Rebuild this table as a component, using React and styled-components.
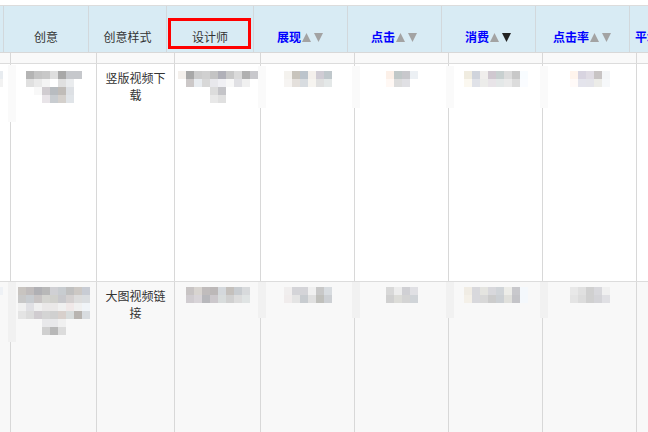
import React from "react";
import styled, { createGlobalStyle } from "styled-components";

const GlobalStyle = createGlobalStyle`
  html, body {
    margin: 0;
    padding: 0;
    background: #ffffff;
    overflow: hidden;
  }
  body {
    font-family: "Noto Sans CJK SC", "Liberation Sans", sans-serif;
  }
`;

const headCols = [
  { w: 4 },
  { w: 85, label: "创意" },
  { w: 78, label: "创意样式" },
  { w: 87, label: "设计师", marked: true },
  { w: 94, label: "展现", sort: "none" },
  { w: 94, label: "点击", sort: "none" },
  { w: 94, label: "消费", sort: "down" },
  { w: 94, label: "点击率", sort: "none" },
  { w: 94, label: "平均点击价", sort: "none" },
];

const bodyWidths = [11, 86, 78, 86, 94, 94, 94, 94, 94];

// blurred thumbnails, 8px blocks, null = background
const _ = null;
const rows = [
  {
    height: 218,
    bg: "#ffffff",
    strip: "#fafafa",
    mt: 2,
    style: "竖版视频下载",
    edge: [["#e8ecf0"], ["#f2f2f2"]],
    creative: [
      ["#b4b4b4", "#c4c4c4", "#c8c8c8", "#dedede", "#a8a8a8", "#c6c8cc", "#c6c8cc"],
      ["#e0e0e0", "#eaeaea", "#f4f4f4", _, "#e0e0e0", "#eaecee", _],
      [_, "#f8f8f8", "#d0ccd0", "#b8bcc0", "#c0bcb8", "#dde0e4", _],
      [_, _, "#e8e4e8", "#c8ccd0", "#d4d0cc", "#e0e4e8", _],
    ],
    designer: [
      ["#f4f0ec", "#a8a8a8", "#cccccc", "#d0d0d0", "#c4c4c4", "#b0b0b8", "#c8c8c8", "#dadada", "#b0b0b0", "#c8c8cc"],
      [_, "#ccc8c8", "#e8ecf0", "#d8d8d8", "#e8e8ec", "#f0f0f4", "#f8f8f8", "#e0e0e4", "#f0f0f0", _],
      [_, _, _, _, "#dcdcdc", "#c4c4c8", _, _, _, _],
      [_, _, _, _, "#e8e8e8", "#e0e0e0", _, _, _, _],
    ],
    nums: [
      [
        ["#f4f2ee", "#c8c4bc", "#bcc4cc", "#f4f0ec", "#d0ccd4", "#c0c8cc"],
        ["#f6f4f2", "#e4e0dc", "#d8dce0", "#f6f4f0", "#e0e0e0", "#e4e8e8"],
      ],
      [
        ["#fcf0e8", "#c0c8c8", "#c8c8cc", "#ecf0f4"],
        ["#fff8f4", "#dcdcdc", "#e0e0e4", _],
      ],
      [
        ["#f0ece0", "#d0d4dc", "#f0eeec", "#d0c8d0", "#c8d0d0", "#dcdcdc", "#c8c8c8", "#f8fcff"],
        ["#fbf8f0", "#e0e2e8", "#ececea", "#e8e4e8", "#e4e8e8", "#eaeaea", "#dcdcdc", "#fafcff"],
      ],
      [
        ["#fff4ec", "#d8d4e0", "#e0dce4", "#c8c4c4", "#f4f6f8"],
        ["#fffaf8", "#e4e4ec", "#e4e4ea", "#ecece8", "#f6f8fa"],
      ],
    ],
    stripTop: 2,
    stripH: 42,
    cStripTop: 1,
    cStripH: 57,
  },
  {
    height: 200,
    bg: "#f8f8f8",
    strip: "#f1f1f1",
    mt: 0,
    style: "大图视频链接",
    edge: [["#eef1f5"]],
    creative: [
      ["#c8c4c0", "#c0bcbc", "#b0b0b4", "#b8b8b8", "#d0d0d4", "#c8ccd0", "#c0c0c0", "#ccc8c4", "#c8ccd4"],
      ["#c8c8c8", "#c8ccd0", "#c8c4c4", "#d4d4d0", "#d0d0cc", "#c8c8cc", "#d4d0d0", "#dcdcdc", "#dadde0"],
      ["#f0f0f0", "#e0e0e4", "#f0f0f0", "#eae8e8", "#eae8e8", "#f0f0f0", "#f0e8e8", "#f0f0f0", "#f0f4f8"],
      ["#e4e4e4", "#dcdcdc", "#d0ccd0", "#d4d4d4", "#d0d0d0", "#d8d0cc", "#d8dcdc", "#b8b4b0", "#d8dce0"],
      [_, _, _, "#e8e8ea", "#e8e8ea", "#f0f0f0", _, _, _],
      [_, _, _, "#d0d0d0", "#b8b8b8", "#dcdcdc", _, _, _],
    ],
    designer: [
      ["#c8c4c4", "#d8d4d0", "#c0bcbc", "#bcb8b8", "#d4d8dc", "#c4c0bc", "#c8ccd0", "#d8dadc"],
      ["#d0ccd0", "#d8d4d8", "#b8b8bc", "#ccc8cc", "#d8dcdc", "#d0d0d0", "#dcdcdc", "#e0e4e4"],
    ],
    nums: [
      [
        ["#f0eeee", "#d4d4d8", "#d4d4d8", "#f0f0f0", "#c8c8c8", "#d8dce0"],
        ["#f0ecec", "#e4e4e4", "#c8ccd0", "#e0e0e0", "#c0c0bc", "#cdd0d4"],
      ],
      [
        ["#d8d8d8", "#ececec", "#d0d0d4", "#e0e0e4"],
        ["#d0d0d0", "#dcdcd8", "#d4d4d4", "#d0d4d8"],
      ],
      [
        ["#f0ece4", "#d8d8dc", "#e4e4e0", "#d8d8dc", "#d0d4d8", "#ecece8", "#c8c8cc", "#f4f8fc"],
        ["#f4f0e8", "#d8d8dc", "#d8d8d8", "#cccccc", "#ccd0d4", "#e0e0dc", "#c4c4c8", "#f4f8fc"],
      ],
      [
        ["#e8e8e8", "#e0e0e0", "#d0d0d0", "#d8d8dc", "#f0f0f0"],
        ["#e4e4e4", "#dcdcdc", "#d0d0d0", "#d4d4d8", "#e0e0e4"],
      ],
    ],
    stripTop: 0,
    stripH: 36,
    cStripTop: 0,
    cStripH: 60,
  },
];

const Page = styled.div`
  width: 648px;
  height: 432px;
  overflow: hidden;
  padding-top: 5px;
  box-sizing: border-box;
  background: #ffffff;
`;

const Table = styled.div`
  width: 760px;
`;

const HeadRow = styled.div`
  display: flex;
  height: 48px;
  box-sizing: border-box;
  background: #d8ebf4;
  border-top: 1px solid #dcdcdc;
  border-bottom: 1px solid #d8d8d8;
`;

const HeadCell = styled.div`
  position: relative;
  flex: 0 0 ${(p) => p.$w}px;
  min-width: 0;
  box-sizing: border-box;
  border-right: 1px solid #d2d8dc;
  display: flex;
  align-items: flex-end;
  justify-content: center;
  padding-bottom: 7px;
  font-size: 12px;
  line-height: 16px;
  color: #333333;
  white-space: nowrap;

  ${(p) =>
    p.$marked &&
    `
    &::after {
      content: "";
      position: absolute;
      left: 1px;
      right: 2px;
      top: 12px;
      bottom: 3px;
      border: 3px solid #ff0000;
    }
  `}
`;

const SortLabel = styled.span`
  color: #0000ff;
  font-weight: bold;
`;

const HeadInner = styled.span`
  display: inline-flex;
  align-items: center;
`;

const Arrows = styled.svg`
  display: block;
  flex: none;
  margin-left: 1px;
`;

const Row = styled.div`
  display: flex;
  height: ${(p) => p.$h}px;
  box-sizing: border-box;
  background: ${(p) => p.$bg};
  border-bottom: ${(p) => (p.$line ? "1px solid #dcdcdc" : "none")};
`;

const Cell = styled.div`
  position: relative;
  flex: 0 0 ${(p) => p.$w}px;
  min-width: 0;
  box-sizing: border-box;
  border-right: 1px solid #d8d8d8;
  padding: 5px 4px 0;
  display: flex;
  flex-direction: column;
  align-items: ${(p) => (p.$edge ? "flex-start" : "center")};
  text-align: center;
  font-size: 12px;
  line-height: 17px;
  color: #333333;

  ${(p) =>
    p.$strip &&
    `
    &::before {
      content: "";
      position: absolute;
      left: -3px;
      top: ${p.$stripTop}px;
      width: 8px;
      height: ${p.$stripH}px;
      background: ${p.$strip};
    }
  `}
`;

const EdgeCell = styled(Cell)`
  padding: 5px 0 0;
  overflow: hidden;
`;

const Mosaic = styled.div`
  position: relative;
  flex: none;
  display: grid;
  grid-template-columns: repeat(${(p) => p.$n}, 8px);
  grid-auto-rows: 8px;
  margin-top: ${(p) => p.$mt}px;
  margin-left: ${(p) => (p.$edge ? "-5px" : "0")};
`;

const Block = styled.div`
  background: ${(p) => p.$c || "transparent"};
`;

const Blur = ({ grid, mt, edge }) => (
  <Mosaic $n={grid[0].length} $mt={mt} $edge={edge}>
    {grid.flat().map((c, i) => (
      <Block key={i} $c={c} />
    ))}
  </Mosaic>
);

const SortArrows = ({ dir }) => (
  <Arrows width="22" height="9" viewBox="0 0 22 9">
    <polygon points="0,9 4.5,0 9,9" fill={dir === "up" ? "#222222" : "#a3a3a3"} />
    <polygon points="12,0 21,0 16.5,9" fill={dir === "down" ? "#222222" : "#a3a3a3"} />
  </Arrows>
);

const App = () => {
  return (
    <>
      <GlobalStyle />
      <Page>
        <Table>
          <HeadRow>
            {headCols.map((c, i) => (
              <HeadCell key={i} $w={c.w} $marked={c.marked}>
                {c.sort ? (
                  <HeadInner>
                    <SortLabel>{c.label}</SortLabel>
                    <SortArrows dir={c.sort} />
                  </HeadInner>
                ) : (
                  c.label
                )}
              </HeadCell>
            ))}
          </HeadRow>

          <Row $h={11} $bg="#f9f9f9" $line>
            {bodyWidths.map((w, i) => (
              <Cell key={i} $w={w} />
            ))}
          </Row>

          {rows.map((r, ri) => (
            <Row key={ri} $h={r.height} $bg={r.bg} $line={ri === 0}>
              <EdgeCell $w={bodyWidths[0]} $edge>
                <Blur grid={r.edge} mt={r.mt} edge />
              </EdgeCell>
              <Cell
                $w={bodyWidths[1]}
                $strip={r.strip}
                $stripTop={r.cStripTop}
                $stripH={r.cStripH}
              >
                <Blur grid={r.creative} mt={r.mt} />
              </Cell>
              <Cell $w={bodyWidths[2]}>{r.style}</Cell>
              <Cell $w={bodyWidths[3]}>
                <Blur grid={r.designer} mt={r.mt} />
              </Cell>
              {r.nums.map((g, i) => (
                <Cell
                  key={i}
                  $w={bodyWidths[4 + i]}
                  $strip={r.strip}
                  $stripTop={r.stripTop}
                  $stripH={r.stripH}
                >
                  <Blur grid={g} mt={r.mt} />
                </Cell>
              ))}
              <Cell $w={bodyWidths[8]} />
            </Row>
          ))}
        </Table>
      </Page>
    </>
  );
};

export default App;
